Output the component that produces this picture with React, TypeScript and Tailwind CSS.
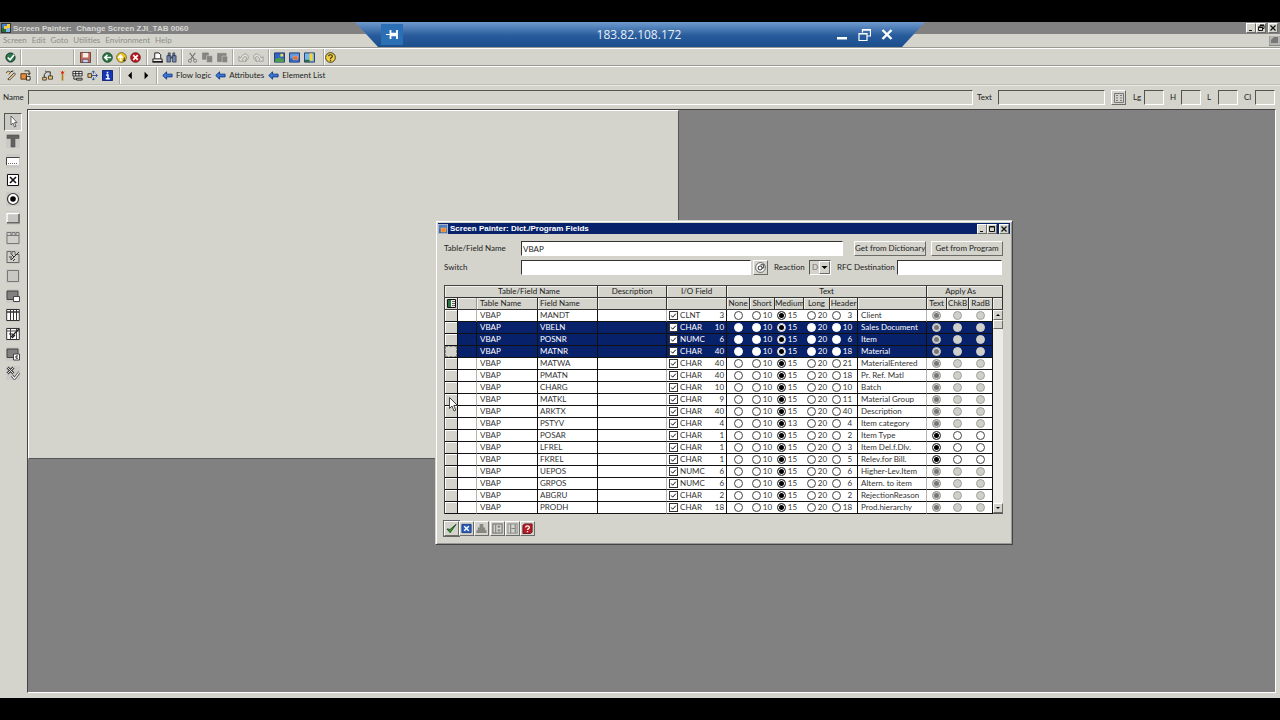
import React from "react";

type IconProps = { children: React.ReactNode; size?: string; box?: string };

const raised = "border border-t-white border-l-white border-r-[#6b6b68] border-b-[#6b6b68] bg-[#d4d4cc]";
const sunken = "border border-t-[#55554f] border-l-[#55554f] border-r-white border-b-white";

function Icon({ children, size = "size-[11px]", box = "0 0 12 12" }: IconProps) {
  return (
    <svg viewBox={box} className={`${size} block shrink-0`} fill="none" stroke="#111" aria-hidden="true">
      {children}
    </svg>
  );
}

function Tool({ label, children }: { label: string; children: React.ReactNode }) {
  return (
    <button type="button" aria-label={label} className="flex h-4 w-[11px] shrink-0 items-center justify-center">
      <Icon>{children}</Icon>
    </button>
  );
}

function Divider() {
  return <span className="h-[17px] w-[2px] shrink-0 border-r border-l border-r-white border-l-[#a9a9a2]" />;
}

function AppIcon({ orange = false }: { orange?: boolean }) {
  return (
    <Icon size="size-[10px]" box="0 0 10 10">
      <rect x=".5" y=".5" width="9" height="9" fill="#e8e4d0" stroke={orange ? "#a9b4c8" : "#333"} />
      <path d="M1 1h5v4H1z" fill={orange ? "#4b7fc4" : "#3d80d0"} stroke="none" />
      <path d="M6 1h3v4H6z" fill={orange ? "#4b7fc4" : "#f5d040"} stroke="none" />
      <path d="M1 5h4v4H1z" fill={orange ? "#3469b4" : "#256b35"} stroke="none" />
      <path d="M5 5h4v4H5z" fill={orange ? "#3469b4" : "#79b5e8"} stroke="none" />
      {orange ? <path d="M3 4h5v4H3z" fill="#f08a2c" stroke="#f0b070" strokeWidth=".6" /> : <path d="M3 3h3v3H3z" fill="#f4c63c" stroke="none" />}
    </Icon>
  );
}

function WindowButtons({ restore = false }: { restore?: boolean }) {
  const cls = `${raised} flex h-[10px] w-[10px] items-center justify-center`;
  return (
    <div className="flex shrink-0">
      <button type="button" aria-label="Minimize" className={cls}>
        <Icon size="size-2" box="0 0 8 8"><path d="M2 6.500h3" /></Icon>
      </button>
      <button type="button" aria-label="Maximize" className={cls}>
        <Icon size="size-2" box="0 0 8 8">
          {restore ? <path d="M3 3V1.500h4v3H5.500M1.500 3.500h4v3h-4zM3 1h4M1 3h5" /> : <path d="M1.500 1.500h5v5h-5zM1 2h6" />}
        </Icon>
      </button>
      <button type="button" aria-label="Close" className={`${cls} ml-[2px]`}>
        <Icon size="size-2" box="0 0 8 8"><path d="M1.500 1.500l5 5M6.500 1.500l-5 5" strokeWidth="1.300" /></Icon>
      </button>
    </div>
  );
}

function ConnectionBar() {
  return (
    <div className="absolute top-[22px] left-1/2 z-10 flex h-[25px] w-[570px] -translate-x-1/2 items-center bg-linear-to-b from-[#6f9bce] from-0% via-[#275b9b] via-55% to-[#1c4e8d] pr-8 pl-[26px] text-white [clip-path:polygon(0_0,100%_0,calc(100%-23px)_100%,23px_100%)]">
      <button type="button" aria-label="Pin" className="flex h-[21px] w-[22px] items-center justify-center bg-[#2b6fb4]">
        <svg viewBox="0 0 14 12" className="h-3 w-[14px]" stroke="#fff" fill="none" aria-hidden="true">
          <path d="M1 5.500h4" strokeWidth="1.200" /><path d="M5.500 1v9" strokeWidth="1.800" /><path d="M6 5.500h6" strokeWidth="3.600" /><path d="M12 1v9" strokeWidth="1.800" />
        </svg>
      </button>
      <span className="flex-1 pl-[38px] text-center font-['Open_Sans',sans-serif] text-[12px] leading-4 text-[#e6eef8]">183.82.108.172</span>
      <div className="flex items-center gap-[10px]">
        <button type="button" aria-label="Minimize session"><svg viewBox="0 0 11 12" className="h-3 w-[11px]" aria-hidden="true"><path d="M0 8h10v2.500H0z" fill="#fff" /></svg></button>
        <button type="button" aria-label="Restore session"><svg viewBox="0 0 13 12" className="h-3 w-[13px]" fill="none" stroke="#fff" aria-hidden="true"><path d="M4.500 3.500V.5h8v6.500h-3M4 1.200h9M1 4.500h8v7H1zM.5 5h9" strokeWidth="1.200" /></svg></button>
        <button type="button" aria-label="Close session"><svg viewBox="0 0 12 12" className="h-3 w-3" stroke="#fff" aria-hidden="true"><path d="M1.500 1l9 9M10.500 1l-9 9" strokeWidth="2.400" /></svg></button>
      </div>
    </div>
  );
}

function StandardToolbar() {
  return (
    <div className="flex h-[17px] items-center border-t border-white pl-[5px]">
      <Tool label="Enter"><circle cx="6" cy="6" r="5" fill="#2b7a45" stroke="#123" /><path d="M3 6l2.500 2.500L10 3" stroke="#fff" strokeWidth="1.800" /></Tool>
      <div className="ml-1 flex items-center">
        <Divider />
        <input aria-label="Command" className="h-3 w-[51px] bg-transparent outline-none" />
        <Divider />
      </div>
      <div className="mx-[5px] flex"><Tool label="Save"><path d="M.5.5h11v11H.5z" fill="#c76a55" stroke="#5d3b3b" /><path d="M3 1h6v5H3z" fill="#f4efe6" stroke="none" /><path d="M3 8h6v3.500H3z" fill="#c9d0e8" stroke="#446" strokeWidth=".7" /></Tool></div>
      <Divider />
      <div className="mr-[5px] ml-1 flex gap-[3px]">
        <Tool label="Back"><circle cx="6" cy="6" r="5.300" fill="#25733f" stroke="#173b22" strokeWidth=".8" /><path d="M10 6H3M6 3L3 6l3 3" stroke="#fff" strokeWidth="1.800" /></Tool>
        <Tool label="Exit"><circle cx="6" cy="6" r="5.300" fill="#f0c625" stroke="#5b4b12" strokeWidth=".8" /><path d="M5 10V5M2.500 6.500L5 3.500 7.500 6.500" stroke="#fff" strokeWidth="1.800" /><path d="M7.500 9.500h3M9 6v3" stroke="#222" /></Tool>
        <Tool label="Cancel"><circle cx="6" cy="6" r="5.300" fill="#c4171d" stroke="#4c1013" strokeWidth=".8" /><path d="M3.500 3.500l5 5M8.500 3.500l-5 5" stroke="#fff" strokeWidth="1.800" /></Tool>
      </div>
      <Divider />
      <div className="mx-1 flex gap-[3px]">
        <Tool label="Print"><path d="M3 7V1h4.500l2 2V7" fill="#fff" /><path d="M1 7.500h10v3H1z" fill="#eee" /><path d="M.5 10.800h11.500" strokeWidth="1.600" /></Tool>
        <Tool label="Find"><path d="M2.500 1h2v3h-2zM7.500 1h2v3h-2zM1 4h4v7H1zM7 4h4v7H7z" fill="#7385a8" stroke="#2c3850" strokeWidth=".8" /><path d="M5 5h2v2H5z" fill="#2c3850" stroke="none" /></Tool>
      </div>
      <Divider />
      <div className="mx-1 flex gap-1">
        <Tool label="Cut"><path d="M3 1l5 7M9 1L4 8" stroke="#777" strokeWidth="1.200" /><circle cx="3.200" cy="9.500" r="1.700" stroke="#777" /><circle cx="8.800" cy="9.500" r="1.700" stroke="#777" /></Tool>
        <Tool label="Copy"><path d="M.5 1h6.500v7H.5z" fill="#858582" stroke="#777" strokeWidth=".6" /><path d="M5 4h6.500v7.500H5z" fill="#858582" stroke="#d4d4cc" strokeWidth=".6" /></Tool>
        <Tool label="Paste"><path d="M.5 1.500h9.500v9H.5z" fill="#858582" stroke="#777" strokeWidth=".6" /><path d="M5.500 4.500h6v7h-6z" fill="#858582" stroke="#d4d4cc" strokeWidth=".6" /></Tool>
      </div>
      <Divider />
      <div className="mx-1 flex gap-1">
        <Tool label="Undo"><path d="M1 5v5h5L4.500 8.200C6 5 8 4 9 5.500S8.500 9 7.500 10.500C11 9 12 6 10.500 3.500S5 2 3 6.700z" fill="#e4e4dc" stroke="#888" strokeWidth=".8" /></Tool>
        <Tool label="Redo"><path d="M11 5v5H6l1.500-1.800C6 5 4 4 3 5.500S3.500 9 4.500 10.500C1 9 0 6 1.500 3.500S7 2 9 6.700z" fill="#e4e4dc" stroke="#888" strokeWidth=".8" /></Tool>
      </div>
      <Divider />
      <div className="mx-1 flex gap-1">
        <Tool label="New session"><path d="M.5 1h11v10H.5z" fill="#2f66c3" stroke="#1c3563" /><path d="M1 8l5-2 5 2v3H1z" fill="#4c9a52" stroke="none" /><path d="M7 2h3v3H7z" fill="#f7dc52" stroke="none" /></Tool>
        <Tool label="Shortcut"><path d="M.5 1h11v10H.5z" fill="#5b9ae0" stroke="#1c3563" /><path d="M1 7h10v4H1z" fill="#2f66c3" stroke="none" /><path d="M4.500 4.500h5v4h-5z" fill="#e36b35" stroke="#f0b090" strokeWidth=".6" /></Tool>
        <Tool label="Layout"><path d="M.5 1h11v10H.5z" fill="#76b8ea" stroke="#1c3563" /><path d="M6 1.500h3.500v8H6z" fill="#f4d436" stroke="none" /><path d="M1 8.500h5V11H1z" fill="#276b3a" stroke="none" /></Tool>
      </div>
      <span className="w-1" /><Divider />
      <Tool label="Help"><circle cx="6" cy="6" r="5.300" fill="#f3d13c" stroke="#3c3517" /><path d="M4 4.500C4 2.500 8 2.500 8 4.500S6 5.500 6 7.500M6 8.500V10" stroke="#333" strokeWidth="1.300" /></Tool>
    </div>
  );
}

function LinkButton({ children }: { children: string }) {
  return (
    <button type="button" className="flex items-center gap-[3px]">
      <Icon><path d="M.8 6L5 2v2.500h6v3H5V10z" fill="#3b77d8" stroke="#153a82" /></Icon>
      {children}
    </button>
  );
}

function PainterToolbar() {
  return (
    <div className="flex h-[18px] items-center border-t border-white pl-[5px]">
      <div className="mr-[5px] flex gap-1">
        <Tool label="Display or change"><path d="M1 3l3-2 2 2-2 2M3 10l7-7 1.500 1.500L5 11z" fill="#f1c88e" stroke="#333" strokeWidth=".9" /><path d="M6 2l3-1" /></Tool>
        <Tool label="Other object"><path d="M1 4h6v6H1z" fill="#e58c3c" stroke="#5f3515" /><path d="M5 1h5v4M10 5L8 3.500M10 5l1.500-2M7 7h4v4H7z" fill="#f5e7ca" strokeWidth=".9" /></Tool>
      </div>
      <Divider />
      <div className="mr-[6px] ml-1 flex gap-1">
        <Tool label="Check"><path d="M.7 8h4v3h-4zM7 6.500h4.500v3.500H7z" fill="#f3c36b" stroke="#333" strokeWidth=".9" /><path d="M2.500 8V5L5 2h4v4.500M5 2L3.500 1" strokeWidth=".9" /></Tool>
        <Tool label="Activate"><path d="M6 5v6.500" stroke="#b47a13" strokeWidth="1.800" /><path d="M6 1v4M4.500 3h3" stroke="#dd2918" strokeWidth="1.500" /><path d="M3 1l1 1M9 1L8 2M3 5l1-1M9 5L8 4" stroke="#e8b22e" /></Tool>
        <Tool label="Test"><path d="M1 1.500h10v5H1zM1 4h10M4 1.500v5M7.500 1.500v5" fill="#fff" strokeWidth=".9" /><path d="M5 9h6v2H5zM2 7v3h3" fill="#d4d4cc" strokeWidth=".9" /></Tool>
        <Tool label="Where-used list"><path d="M1 4h4v4H1z" fill="#f3c36b" strokeWidth=".8" /><path d="M5 6h6M9.500 4l2 2-2 2M7 4V1M5.500 2.500L7 1l1.500 1.500M7 8v3M5.500 9.500L7 11l1.500-1.500" stroke="#244a9b" /></Tool>
        <Tool label="Information"><path d="M.5.5h11v11H.5z" fill="#1536b5" stroke="#0b1e71" /><path d="M6 2v1.800M4.500 5.500h2v4M4 9.500h4.500" stroke="#fff" strokeWidth="1.600" /></Tool>
      </div>
      <Divider />
      <div className="mx-[3px] flex gap-[5px]">
        <Tool label="Previous"><path d="M8.500 2v8L4.500 6z" fill="#000" stroke="none" /></Tool>
        <Tool label="Next"><path d="M5 2v8l4-4z" fill="#000" stroke="none" /></Tool>
      </div>
      <span className="w-[2px]" /><Divider />
      <div className="ml-1 flex gap-1">
        <LinkButton>Flow logic</LinkButton><LinkButton>Attributes</LinkButton><LinkButton>Element List</LinkButton>
      </div>
    </div>
  );
}

function SmallField({ label }: { label: string }) {
  return (
    <label className="flex items-center justify-end">
      <span className="w-[11px]">{label}</span>
      <input className={`${sunken} h-[15px] w-5 bg-transparent`} />
    </label>
  );
}

function NameRow() {
  return (
    <div className="flex h-[25px] items-center border-t border-[#c0c0b8] pt-px pr-[5px] pl-[3px] shadow-[inset_0_1px_0_#e8e8e2]">
      <label className="flex flex-1 items-center"><span className="w-[25px]">Name</span><input className={`${sunken} h-[15px] min-w-0 flex-1 bg-transparent`} /></label>
      <label className="ml-1 flex items-center"><span className="w-[21px]">Text</span><input className={`${sunken} h-[15px] w-[107px] bg-transparent`} /></label>
      <button type="button" aria-label="Text list" className={`${raised} mr-[7px] ml-[6px] flex size-[15px] items-center justify-center`}>
        <Icon size="size-[10px]" box="0 0 10 10"><path d="M.5.500h9v9h-9zM2 2.500h2M6 2.500h2M2 5h2M6 5h2M2 7.500h2M6 7.500h2" stroke="#777" /></Icon>
      </button>
      <div className="flex gap-[6px]">
        {["Lg", "H", "L", "Cl"].map((l) => <SmallField key={l} label={l} />)}
      </div>
    </div>
  );
}

const palette: { name: string; art: React.ReactNode }[] = [
  { name: "Select", art: <path d="M5 1v9l2-2 1.500 4 1.500-.7L8.500 7.500H11z" fill="#fff" stroke="#555" strokeWidth=".9" /> },
  { name: "Text field", art: <path d="M1 1h12v3.500H9V13H5V4.500H1z" fill="#62625f" stroke="#555" strokeWidth=".6" /> },
  { name: "Input field", art: <><path d="M1 4h12v7H1z" fill="#fff" stroke="none" /><path d="M.5 11V3.500H13.500" stroke="#444" /><path d="M2 9.500h10" stroke="#666" strokeDasharray="1 1" /></> },
  { name: "Checkbox", art: <><path d="M1.500 1.500h11v11h-11z" fill="#fff" /><path d="M4 4l6 6M10 4l-6 6" strokeWidth="1.600" /></> },
  { name: "Radio button", art: <><circle cx="7" cy="7" r="5.500" fill="#fff" stroke="#333" strokeWidth="1.200" /><circle cx="7" cy="7" r="2.800" fill="#000" stroke="none" /></> },
  { name: "Pushbutton", art: <><path d="M1 2.500h12v9H1z" fill="#c6c6c2" stroke="none" /><path d="M1 11.500V2.500h12" stroke="#fff" strokeWidth="1.400" /><path d="M1 11.800h12V3" stroke="#666" strokeWidth="1.600" /></> },
  { name: "Tabstrip", art: <path d="M1 12.500v-11h4v3h1v-3h3v3h1v-3h3v11zM1 4.500h12" stroke="#777" fill="#d0d0cb" /> },
  { name: "Tabstrip wizard", art: <><path d="M1 12.500v-11h4v3h1v-3h3v3h4v8z" stroke="#666" fill="#d0d0cb" /><path d="M5 10l8-8M3 7h3M4 9h2M7 11l2-2M6 5l2 2" stroke="#333" /></> },
  { name: "Box", art: <path d="M1.500 1.500h11v11h-11z" stroke="#777" fill="#c8c8c4" /> },
  { name: "Subscreen area", art: <><path d="M1 2h11v8.500H1z" fill="#818180" stroke="#444" /><path d="M7.500 7.500h6v5h-6z" fill="#fff" stroke="#444" /></> },
  { name: "Table control", art: <><path d="M.7 1.500h12.600v11H.7z" fill="#fff" stroke="#333" /><path d="M1 4h12" stroke="#333" strokeWidth="1.500" /><path d="M4.500 2v10M7.500 2v10M10.500 2v10" stroke="#333" /></> },
  { name: "Table control wizard", art: <><path d="M.7 1.500h12.600v11H.7z" fill="#fff" stroke="#333" /><path d="M1 4h12M4.500 2v10M10.500 2v10" stroke="#444" /><path d="M5 10l8-8M3 7h4M6 11l3-3" stroke="#222" strokeWidth="1.200" /></> },
  { name: "Custom control", art: <><path d="M1 2h11v8.500H1z" fill="#818180" stroke="#444" /><path d="M7.500 7h6v6h-6z" fill="#fff" stroke="#444" /><path d="M12 9h-2v2.200h2" stroke="#111" strokeWidth=".9" /></> },
  { name: "Status icon", art: <><path d="M1.500 1.500l6 6M7.500 1.500l-6 6" stroke="#444" strokeWidth="2.800" /><path d="M1.500 1.500l6 6M7.500 1.500l-6 6" stroke="#ddd" /><path d="M6 9.500l2.500 3L13.500 6" stroke="#555" strokeWidth="2.800" /><path d="M6 9.500l2.500 3L13.500 6" stroke="#fff" strokeWidth="1.100" /></> },
];

function Palette() {
  return (
    <div className="flex h-[273px] w-[27px] shrink-0 flex-col items-start justify-between pt-1 pl-1">
      {palette.map((p, i) => (
        <button key={p.name} type="button" aria-label={p.name} className={`flex size-[18px] items-center justify-center ${i === 0 ? `${sunken} bg-[#c9c9c5]` : ""}`}>
          <span className="bg-[#cacac6]"><Icon size="size-[14px]" box="0 0 14 14">{p.art}</Icon></span>
        </button>
      ))}
    </div>
  );
}

type Row = { field: string; type: string; len: number; medium: number; header: number; text: string; selected?: boolean; open?: boolean };

const rows: Row[] = [
  { field: "MANDT", type: "CLNT", len: 3, medium: 15, header: 3, text: "Client" },
  { field: "VBELN", type: "CHAR", len: 10, medium: 15, header: 10, text: "Sales Document", selected: true },
  { field: "POSNR", type: "NUMC", len: 6, medium: 15, header: 6, text: "Item", selected: true },
  { field: "MATNR", type: "CHAR", len: 40, medium: 15, header: 18, text: "Material", selected: true },
  { field: "MATWA", type: "CHAR", len: 40, medium: 15, header: 21, text: "MaterialEntered" },
  { field: "PMATN", type: "CHAR", len: 40, medium: 15, header: 18, text: "Pr. Ref. Matl" },
  { field: "CHARG", type: "CHAR", len: 10, medium: 15, header: 10, text: "Batch" },
  { field: "MATKL", type: "CHAR", len: 9, medium: 15, header: 11, text: "Material Group" },
  { field: "ARKTX", type: "CHAR", len: 40, medium: 15, header: 40, text: "Description" },
  { field: "PSTYV", type: "CHAR", len: 4, medium: 13, header: 4, text: "Item category" },
  { field: "POSAR", type: "CHAR", len: 1, medium: 15, header: 2, text: "Item Type", open: true },
  { field: "LFREL", type: "CHAR", len: 1, medium: 15, header: 3, text: "Item Del.f.Dlv.", open: true },
  { field: "FKREL", type: "CHAR", len: 1, medium: 15, header: 5, text: "Relev.for Bill.", open: true },
  { field: "UEPOS", type: "NUMC", len: 6, medium: 15, header: 6, text: "Higher-Lev.Item" },
  { field: "GRPOS", type: "NUMC", len: 6, medium: 15, header: 6, text: "Altern. to item" },
  { field: "ABGRU", type: "CHAR", len: 2, medium: 15, header: 2, text: "RejectionReason" },
  { field: "PRODH", type: "CHAR", len: 18, medium: 15, header: 18, text: "Prod.hierarchy" },
];

function Radio({ name, label, checked = false, disabled = false, selected = false }: { name: string; label: string; checked?: boolean; disabled?: boolean; selected?: boolean }) {
  const tone = disabled
    ? "bg-[#d0d0cb] checked:bg-[#777] checked:shadow-[inset_0_0_0_1px_#d8d8d4]"
    : "bg-white checked:bg-black checked:shadow-[inset_0_0_0_1px_#fff]";
  const edge = selected ? (disabled ? "border-[#d0d0cb]" : "border-white") : disabled ? "border-[#a0a09c]" : "border-[#444]";
  return (
    <input type="radio" name={name} aria-label={label} defaultChecked={checked} disabled={disabled} className={`m-0 block size-[9px] shrink-0 appearance-none rounded-full border ${tone} ${edge}`} />
  );
}

function TextOption({ row, label, value, checked }: { row: Row; label: string; value: number; checked?: boolean }) {
  return (
    <label className="flex items-center pl-[2px]">
      <Radio name={`text-${row.field}`} label={label} checked={checked} selected={row.selected} />
      <span className="w-[11px] text-right">{value}</span>
    </label>
  );
}

const th = "h-3 overflow-hidden border-r border-b border-[#333] bg-[#d4d4cc] p-0 font-normal whitespace-nowrap shadow-[inset_1px_1px_0_#f0f0ea]";

function FieldRow({ row, index }: { row: Row; index: number }) {
  const b = "h-3 border-b border-b-[#111] p-0 overflow-hidden whitespace-nowrap";
  const dark = "border-r border-r-[#111]";
  const soft = row.selected ? "border-r border-r-[#111]" : "border-r border-r-[#b5b5b0]";
  return (
    <tr className={row.selected ? "bg-[#08216b] text-white" : "bg-white text-[#333]"}>
      <td className={`${b} ${dark} bg-[#d4d4cc]`}>
        <button type="button" aria-label={`Select ${row.field}`} className={index === 3 ? "block h-[11px] w-full border border-dashed border-[#888]" : "block h-[11px] w-full border-t border-l border-white"} />
      </td>
      <td className={`${b} ${soft}`} />
      <td className={`${b} ${dark} pl-[3px]`}>VBAP</td>
      <td className={`${b} ${dark} pl-[2px]`}>{row.field}</td>
      <td className={`${b} ${soft}`} />
      <td className={`${b} ${dark}`}>
        <label className="flex items-center pr-[2px] pl-[2px]">
          <span className="grid size-[9px]">
            <input type="checkbox" defaultChecked className="col-start-1 row-start-1 m-0 block size-[9px] appearance-none border border-[#333] bg-white" />
            <svg viewBox="0 0 9 9" className="pointer-events-none col-start-1 row-start-1 size-[9px]" fill="none" stroke="#111" aria-hidden="true"><path d="M2.200 4.500l1.500 1.700L6.800 2.700" /></svg>
          </span>
          <span className="ml-[2px] flex-1">{row.type}</span>
          <span>{row.len}</span>
        </label>
      </td>
      <td className={b}><div className="flex justify-center"><Radio name={`text-${row.field}`} label="None" selected={row.selected} /></div></td>
      <td className={b}><TextOption row={row} label="Short" value={10} /></td>
      <td className={b}><TextOption row={row} label="Medium" value={row.medium} checked /></td>
      <td className={`${b} pl-px`}><TextOption row={row} label="Long" value={20} /></td>
      <td className={`${b} ${dark}`}><TextOption row={row} label="Header" value={row.header} /></td>
      <td className={`${b} ${soft} pl-[3px]`}>{row.text}</td>
      {["Text", "ChkB", "RadB"].map((l, i) => (
        <td key={l} className={`${b} ${i === 2 ? dark : "pr-px"}`}>
          <div className="flex justify-center"><Radio name={`apply-${row.field}`} label={l} checked={i === 0} disabled={!row.open} selected={row.selected} /></div>
        </td>
      ))}
      {index === 0 && (
        <td rowSpan={rows.length} className="h-px border-b border-b-[#555] bg-[#ecece8] p-0">
          <div className="flex h-full flex-col">
            <button type="button" aria-label="Scroll up" className={`${raised} flex h-[10px] w-full items-center justify-center`}><Icon size="size-[6px]" box="0 0 6 6"><path d="M1 4h4L3 2z" fill="#000" stroke="none" /></Icon></button>
            <div className={`${raised} h-[9px] w-full`} />
            <div className="flex-1" />
            <button type="button" aria-label="Scroll down" className={`${raised} flex h-[10px] w-full items-center justify-center`}><Icon size="size-[6px]" box="0 0 6 6"><path d="M1 2h4L3 4z" fill="#000" stroke="none" /></Icon></button>
          </div>
        </td>
      )}
    </tr>
  );
}

function FieldTable() {
  return (
    <table className="w-[559px] table-fixed border-separate border-spacing-0 border-t border-l border-[#444]">
      <colgroup>
        <col className="w-[13px]" /><col className="w-[19px]" /><col className="w-[61px]" /><col className="w-[60px]" />
        <col className="w-[69px]" /><col className="w-[60px]" /><col className="w-[23px]" /><col className="w-[25px]" />
        <col className="w-[29px]" /><col className="w-[26px]" /><col className="w-[28px]" /><col className="w-[69px]" />
        <col className="w-[20px]" /><col className="w-[22px]" /><col className="w-[24px]" /><col className="w-[10px]" />
      </colgroup>
      <thead>
        <tr>
          <th colSpan={4} className={`${th} pl-4`}>Table/Field Name</th>
          <th className={th}>Description</th>
          <th className={th}>I/O Field</th>
          <th colSpan={6} className={th}>Text</th>
          <th colSpan={4} className={`${th} pr-2`}>Apply As</th>
        </tr>
        <tr className="text-left">
          <th className={th}><span className="flex justify-center"><Icon size="size-[9px]" box="0 0 9 9"><path d="M.5.5h8v8h-8z" fill="#eee" /><path d="M1 1h3v7H1z" fill="#2b7040" stroke="none" /><path d="M5 2.500h3M5 4.500h3M5 6.500h3" stroke="#666" /></Icon></span></th>
          <th className={`${th} border-r-[#999]`} />
          <th className={`${th} pl-[3px]`}>Table Name</th>
          <th className={`${th} pl-[2px]`}>Field Name</th>
          <th className={th} />
          <th className={th} />
          {["None", "Short", "Medium", "Long", "Header"].map((h) => <th key={h} className={`${th} text-center`}>{h}</th>)}
          <th className={th} />
          {["Text", "ChkB", "RadB"].map((h) => <th key={h} className={`${th} text-center`}>{h}</th>)}
          <th className={th} />
        </tr>
      </thead>
      <tbody>{rows.map((r, i) => <FieldRow key={r.field} row={r} index={i} />)}</tbody>
    </table>
  );
}

const field = "h-[15px] border border-t-[#333] border-l-[#333] border-r-white border-b-white bg-white px-px outline-none";

function FieldsDialog() {
  const action = `${raised} h-[15px] w-[72px] whitespace-nowrap`;
  const foot = `${raised} flex size-[15px] items-center justify-center`;
  return (
    <section role="dialog" aria-label="Screen Painter: Dict./Program Fields" className="absolute top-[220px] left-[435px] w-[578px] border border-t-[#d4d4cc] border-r-[#444] border-b-[#444] border-l-[#d4d4cc] bg-[#d4d4cc] pb-2 shadow-[inset_1px_1px_0_#fff,inset_-1px_-1px_0_#999]">
      <header className="mx-[2px] mt-[2px] flex h-[11px] items-center gap-[2px] bg-[#08216b] pr-px text-white">
        <AppIcon orange />
        <h2 className="flex-1 font-['Liberation_Sans',sans-serif] font-bold">Screen Painter: Dict./Program Fields</h2>
        <WindowButtons />
      </header>
      <div className="mt-[7px] flex items-center pr-[9px] pl-2">
        <label className="flex items-center"><span className="w-[77px]">Table/Field Name</span><input defaultValue="VBAP" className={`${field} w-[322px]`} /></label>
        <div className="ml-auto flex gap-[5px]">
          <button type="button" className={action}>Get from Dictionary</button>
          <button type="button" className={action}>Get from Program</button>
        </div>
      </div>
      <div className="mt-1 flex items-center pl-2">
        <label className="flex items-center"><span className="w-[77px]">Switch</span><input className={`${field} w-[230px]`} /></label>
        <button type="button" aria-label="Input help" className={`${raised} ml-[2px] flex size-[15px] items-center justify-center`}>
          <Icon><circle cx="6" cy="6" r="5.300" fill="#fff" stroke="#333" strokeWidth=".8" /><circle cx="5.600" cy="6.500" r="2.200" /><path d="M7.500 6.500h2V3H6" strokeWidth=".9" /></Icon>
        </button>
        <label htmlFor="reaction" className="ml-[6px] w-[35px]">Reaction</label>
        <span className={`${sunken} relative flex h-[15px] w-[22px]`}>
          <select id="reaction" disabled className="w-full appearance-none bg-transparent pl-[2px] text-[#777]"><option>D</option></select>
          <span className={`${raised} pointer-events-none absolute inset-y-0 right-0 flex w-[11px] items-center justify-center`}><Icon size="size-[7px]" box="0 0 7 7"><path d="M.500 2h6L3.500 5z" fill="#000" stroke="none" /></Icon></span>
        </span>
        <label className="ml-[6px] flex items-center"><span className="w-[60px] whitespace-nowrap">RFC Destination</span><input className={`${field} w-[105px]`} /></label>
      </div>
      <div className="mt-[10px] px-2"><FieldTable /></div>
      <footer className="mt-[7px] flex pl-2">
        <button type="button" aria-label="Continue" className={`${foot} outline outline-[#666]`}><Icon><path d="M1 6.500L4.500 10.500 11 1.500 4.500 7z" fill="#3f9d35" stroke="#123d12" strokeWidth=".9" /></Icon></button>
        <button type="button" aria-label="Cancel" className={foot}><Icon><path d="M1 1.500h10v9H1z" fill="#2a5fc0" stroke="#183a80" /><path d="M3.500 3.500l5 5M8.500 3.500l-5 5" stroke="#fff" strokeWidth="1.500" /></Icon></button>
        <button type="button" aria-label="Sort" className={foot}><Icon><path d="M4 1h4v4h2v3h1.500v3H.5V8H2V5h2z" fill="#888883" stroke="none" /></Icon></button>
        <button type="button" aria-label="Select all" className={`${foot} ml-px`}><Icon><path d="M1 1h10v10H1z" stroke="#888" strokeWidth="1.600" /><path d="M4 1v10M6 4h3M6 8h3M7.500 2.500v3M7.500 6.500v3" stroke="#888" strokeWidth="1.300" /></Icon></button>
        <button type="button" aria-label="Deselect all" className={foot}><Icon><path d="M1 1h10v10H1z" stroke="#999" strokeWidth="1.300" /><path d="M4 1v10M5 6h4M9 1v10" stroke="#888" strokeWidth="1.300" /></Icon></button>
        <button type="button" aria-label="Help" className={foot}><Icon><path d="M1 2.500L3 1h8v9l-2 1.500H1z" fill="#b91c26" stroke="#641018" /><path d="M4 5C4 2.700 8 2.700 8 4.700S6 6 6 7.500M6 8.800V10" stroke="#fff" strokeWidth="1.400" /></Icon></button>
      </footer>
    </section>
  );
}

export default function App() {
  return (
    <div className="relative flex h-screen flex-col overflow-hidden bg-black py-[22px] font-['Lato','Liberation_Sans',sans-serif] text-[8px] leading-[11px] text-[#222]">
      <ConnectionBar />
      <div className="flex min-h-0 flex-1 flex-col bg-[#d4d4cc]">
        <header className="flex h-3 shrink-0 items-center gap-[2px] bg-[#818181] pr-[2px] pl-px text-[#d8d8d4]">
          <AppIcon />
          <h1 className="flex-1 font-['Liberation_Sans',sans-serif] font-bold">Screen Painter:&nbsp; Change Screen ZJI_TAB 0060</h1>
          <WindowButtons restore />
        </header>
        <div className="flex h-[14px] shrink-0 items-center border-b border-[#999993] pl-[3px] text-[#8d8d88]">
          <nav className="flex flex-1 gap-[5px]">
            {["Screen", "Edit", "Goto", "Utilities", "Environment", "Help"].map((m) => <button key={m} type="button">{m}</button>)}
          </nav>
          <Icon size="h-[10px] w-[11px]" box="0 0 11 10"><path d="M0 0h11v10H0z" fill="#b5b5b0" stroke="none" /><path d="M0 0v9.500h11" stroke="#888" /><path d="M2 4l3-3h4v6H2z" fill="#777" stroke="none" /></Icon>
        </div>
        <div className="shrink-0"><StandardToolbar /></div>
        <div className="shrink-0 border-t border-[#999993]"><PainterToolbar /></div>
        <div className="shrink-0"><NameRow /></div>
        <main className="flex min-h-0 flex-1 pr-1 pb-[5px]">
          <Palette />
          <div className="flex-1 border border-t-[#444] border-r-white border-b-white border-l-[#444] bg-[#818181]">
            <div className="h-[349px] w-[651px] border border-t-white border-r-[#555] border-b-[#555] border-l-white bg-[#d4d4cc]" />
          </div>
        </main>
      </div>
      <FieldsDialog />
      <svg viewBox="0 0 10 15" className="pointer-events-none absolute top-[397px] left-[449px] h-[15px] w-[10px]" fill="#fff" stroke="#333" strokeWidth=".9" aria-hidden="true"><path d="M.5.5v11L3 9l2 5 1.800-.8L4.800 8.500h3.700z" /></svg>
    </div>
  );
}
